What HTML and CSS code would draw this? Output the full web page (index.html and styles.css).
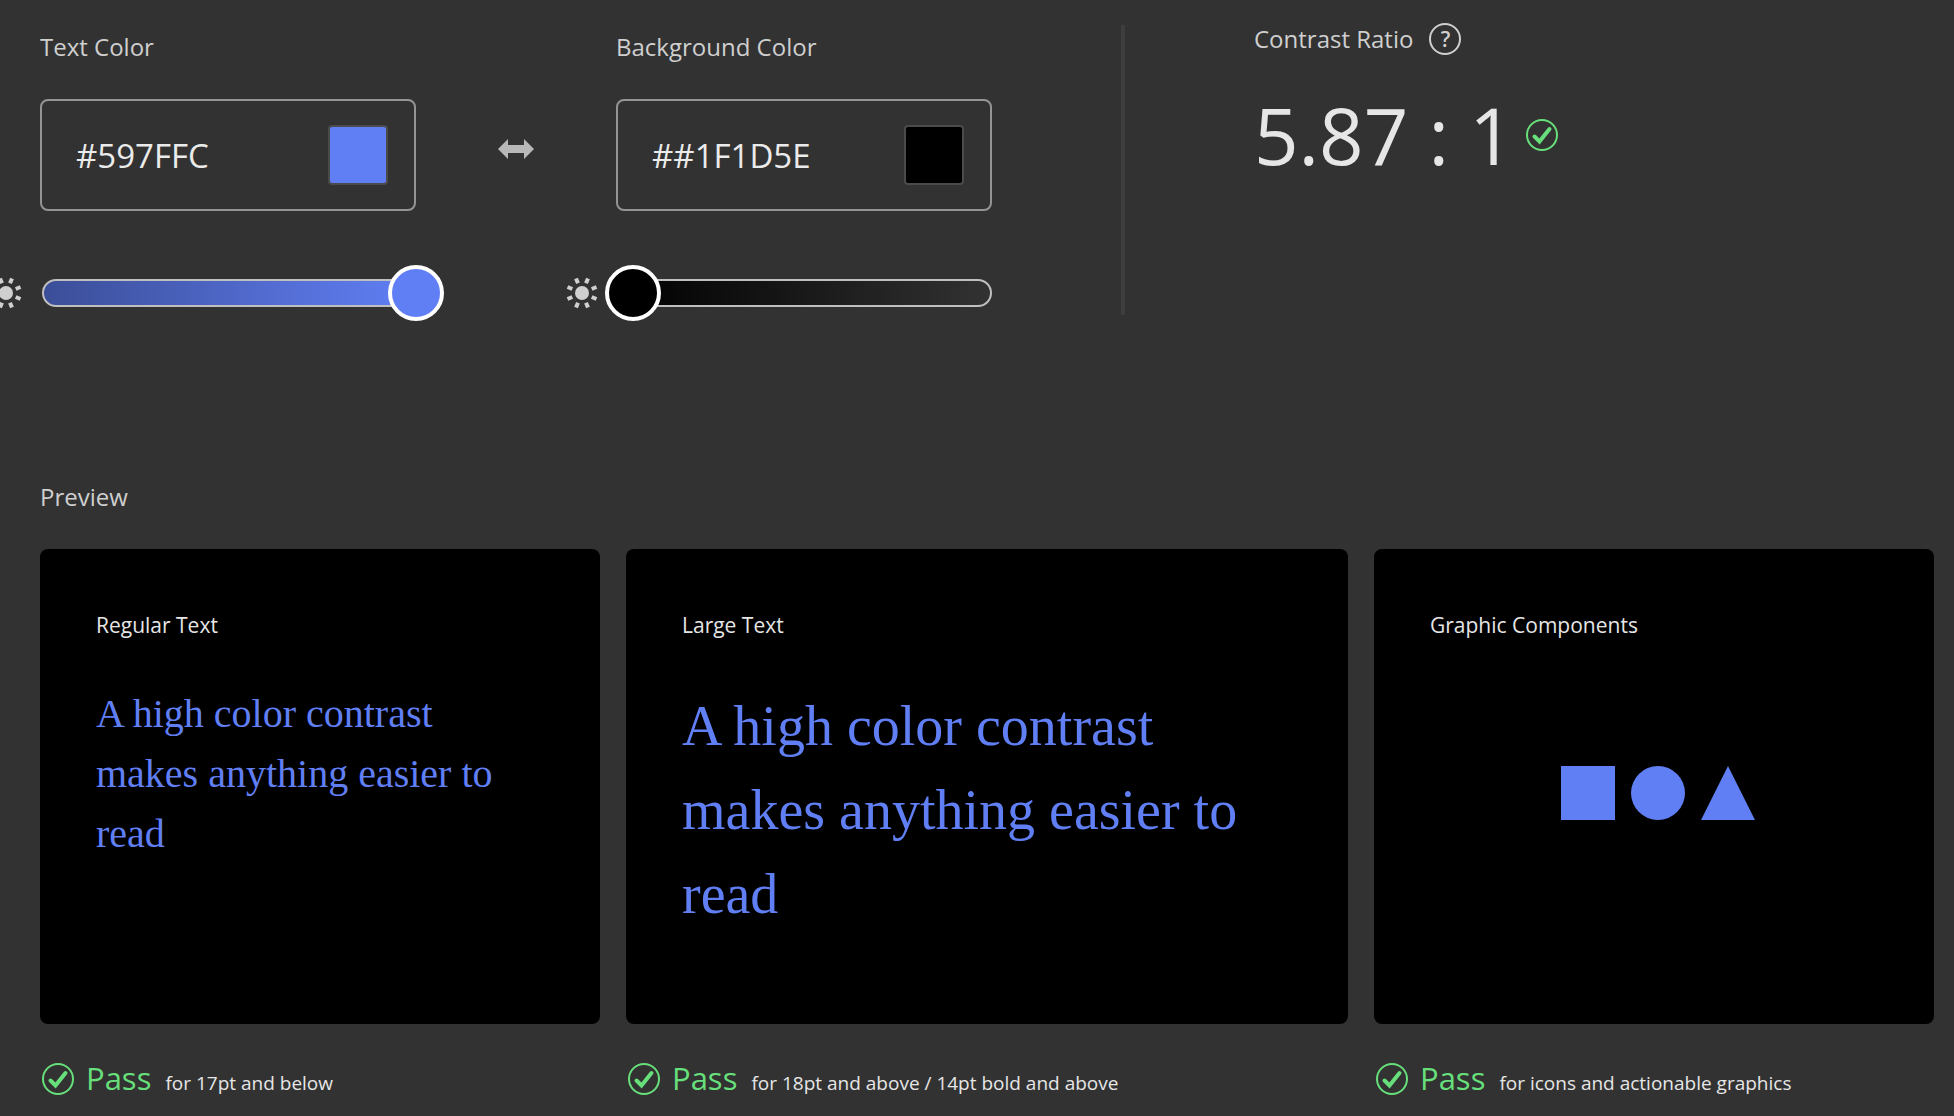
FILE: index.html
```html
<!DOCTYPE html>
<html lang="en">
<head>
<meta charset="utf-8">
<meta name="viewport" content="width=device-width, initial-scale=1">
<title>Contrast Checker</title>
<link rel="stylesheet" href="styles.css">
</head>
<body>
<svg class="defs" aria-hidden="true">
  <symbol id="check" viewBox="0 0 32 32">
    <circle cx="16" cy="16" r="15" fill="none" stroke="currentColor" stroke-width="2"/>
    <path d="M8.500 17.500 13.500 22.500 23.500 10" fill="none" stroke="currentColor" stroke-width="4" stroke-linecap="round" stroke-linejoin="miter"/>
  </symbol>
  <symbol id="sun" viewBox="0 0 32 32">
    <circle cx="16" cy="16" r="7" fill="currentColor"/>
    <g stroke="currentColor" stroke-width="4">
      <path d="M20 6.300 22 1.500M25.700 12 30.500 10M25.700 20 30.500 22M20 25.700 22 30.500M12 25.700 10 30.500M6.300 20 1.500 22M6.300 12 1.500 10M12 6.300 10 1.500"/>
    </g>
  </symbol>
</svg>
<main>
  <section class="controls">
    <div class="color">
      <label class="label" for="text-hex">Text Color</label>
      <div class="field">
        <input class="hex" id="text-hex" type="text" value="#597FFC">
        <button class="swatch swatch-text" type="button" aria-label="Pick text color"></button>
      </div>
      <div class="brightness">
        <svg class="sun" aria-hidden="true"><use href="#sun"/></svg>
        <div class="track track-text"><input class="slider slider-text" type="range" min="0" max="100" value="100" aria-label="Text brightness"></div>
      </div>
    </div>
    <button class="swap" type="button" aria-label="Swap colors">
      <svg width="36" height="20" viewBox="0 0 36 20" aria-hidden="true"><path d="M0 10 10 0V6H26V0L36 10 26 20V14H10V20Z" fill="currentColor"/></svg>
    </button>
    <div class="color">
      <label class="label" for="background-hex">Background Color</label>
      <div class="field">
        <input class="hex" id="background-hex" type="text" value="##1F1D5E">
        <button class="swatch swatch-background" type="button" aria-label="Pick background color"></button>
      </div>
      <div class="brightness">
        <svg class="sun" aria-hidden="true"><use href="#sun"/></svg>
        <div class="track track-background"><input class="slider slider-background" type="range" min="0" max="100" value="4" aria-label="Background brightness"></div>
      </div>
    </div>
    <div class="result">
      <div class="result-head">
        <h2 class="label">Contrast Ratio</h2>
        <button class="help" type="button" aria-label="About contrast ratio">?</button>
      </div>
      <p class="ratio">5.87 : 1 <svg class="check" role="img" aria-label="Pass"><use href="#check"/></svg></p>
    </div>
  </section>

  <section class="preview">
    <h2 class="label">Preview</h2>
    <div class="cards">
      <article>
        <div class="card">
          <h3 class="title">Regular Text</h3>
          <p class="sample">A high color contrast makes anything easier to read</p>
        </div>
        <p class="verdict"><svg class="check" aria-hidden="true"><use href="#check"/></svg><strong class="pass">Pass</strong><span>for 17pt and below</span></p>
      </article>
      <article>
        <div class="card">
          <h3 class="title">Large Text</h3>
          <p class="sample sample-large">A high color contrast makes anything easier to read</p>
        </div>
        <p class="verdict"><svg class="check" aria-hidden="true"><use href="#check"/></svg><strong class="pass">Pass</strong><span>for 18pt and above / 14pt bold and above</span></p>
      </article>
      <article>
        <div class="card">
          <h3 class="title">Graphic Components</h3>
          <div class="shapes">
            <svg viewBox="0 0 54 54" aria-hidden="true"><path d="M0 0H54V54H0Z"/></svg>
            <svg viewBox="0 0 54 54" aria-hidden="true"><circle cx="27" cy="27" r="27"/></svg>
            <svg viewBox="0 0 54 54" aria-hidden="true"><path d="M27 0 54 54H0Z"/></svg>
          </div>
        </div>
        <p class="verdict"><svg class="check" aria-hidden="true"><use href="#check"/></svg><strong class="pass">Pass</strong><span>for icons and actionable graphics</span></p>
      </article>
    </div>
  </section>
</main>
</body>
</html>
```
FILE: styles.css
```css
:root {
  --text-color: #617ff5;
  --background-color: #000;
  --page: #323232;
  --label: #cfcfcf;
  --bright: #e6e6e6;
  --green: #67df7b;
}

* { box-sizing: border-box; }

body {
  margin: 0;
  overflow-x: hidden;
  background: var(--page);
  color: var(--bright);
  font-family: "Open Sans", "Noto Sans", sans-serif;
}

h2, h3, p { margin: 0; font-weight: 400; }

button { padding: 0; border: 0; background: none; color: inherit; font: inherit; }

.defs { display: none; }

main { padding: 23px 20px 0 40px; }

.controls {
  display: grid;
  grid-template-columns: minmax(0, 376fr) minmax(0, 200fr) minmax(0, 376fr) minmax(0, 942fr);
  padding-bottom: 160px;
}

.label { display: block; color: var(--label); font-size: 24px; line-height: 32px; }

.color { padding-top: 8px; }

.field {
  display: flex;
  align-items: center;
  justify-content: space-between;
  height: 112px;
  margin-top: 36px;
  padding: 0 26px 0 34px;
  border: 2px solid #949494;
  border-radius: 8px;
}

.hex {
  flex: 1;
  min-width: 0;
  padding: 0;
  border: 0;
  outline: 0;
  background: none;
  color: #ebebeb;
  font: 33px "Open Sans", "Noto Sans", sans-serif;
}

.swatch { width: 60px; height: 60px; border: 2px solid #4b4b4b; border-radius: 4px; }
.swatch-text { background: var(--text-color); }
.swatch-background { background: var(--background-color); }

.brightness {
  display: flex;
  align-items: center;
  height: 56px;
  margin: 54px 0 0 -50px;
}

.sun { flex: none; width: 32px; height: 32px; margin-right: 20px; color: #cfcfcf; }

.track {
  flex: 1;
  display: flex;
  align-items: center;
  height: 28px;
  border: 2px solid #bfbfbf;
  border-radius: 14px;
}
.track-text { background: linear-gradient(90deg, #3b4e98, #617ff5); }
.track-background { background: linear-gradient(90deg, #000, #323232); }

.slider {
  flex: none;
  width: calc(100% + 60px);
  height: 56px;
  margin: 0 -30px;
  appearance: none;
  background: none;
}
.slider::-webkit-slider-thumb {
  appearance: none;
  width: 56px;
  height: 56px;
  border: 4px solid #fff;
  border-radius: 50%;
}
.slider-text::-webkit-slider-thumb { background: var(--text-color); }
.slider-background::-webkit-slider-thumb { background: var(--background-color); }

.swap { align-self: start; height: 20px; margin-top: 116px; color: #b8b8b8; }
.swap svg { display: block; margin: auto; }

.result {
  height: 290px;
  margin: 2px 0 0 129px;
  padding-left: 129px;
  border-left: 4px solid #3e3e3e;
}

.result-head { display: flex; align-items: center; gap: 16px; margin-top: -2px; }

.help {
  width: 32px;
  height: 32px;
  border: 2px solid #cfcfcf;
  border-radius: 50%;
  color: #cfcfcf;
  font-size: 21px;
  font-weight: 600;
  line-height: 28px;
}

.ratio {
  display: flex;
  align-items: center;
  gap: 12px;
  margin-top: 32px;
  font-size: 78px;
  line-height: 96px;
}

.check { flex: none; width: 32px; height: 32px; color: var(--green); }

.cards {
  display: grid;
  grid-template-columns: 560fr 722fr 560fr;
  gap: 26px;
  margin-top: 36px;
}

.card {
  display: flex;
  flex-direction: column;
  height: 475px;
  padding: 60px 48px 80px 56px;
  border-radius: 8px;
  background: var(--background-color);
}

.title { font-size: 21px; line-height: 32px; }

.sample {
  margin-top: 43px;
  padding-right: 40px;
  color: var(--text-color);
  font: 40px/60px "Liberation Serif", serif;
}
.sample-large { font-size: 56px; line-height: 84px; }

.shapes {
  flex: 1;
  display: flex;
  align-items: center;
  justify-content: center;
  gap: 16px;
}
.shapes svg { width: 54px; height: 54px; fill: var(--text-color); }

.verdict {
  display: flex;
  align-items: baseline;
  margin-top: 34px;
  padding-left: 2px;
  font-size: 19px;
  line-height: 40px;
}
.verdict .check { align-self: center; margin-bottom: 4px; }

.pass {
  margin: 0 14px 0 12px;
  color: var(--green);
  font-size: 31px;
  font-weight: 400;
}
```
